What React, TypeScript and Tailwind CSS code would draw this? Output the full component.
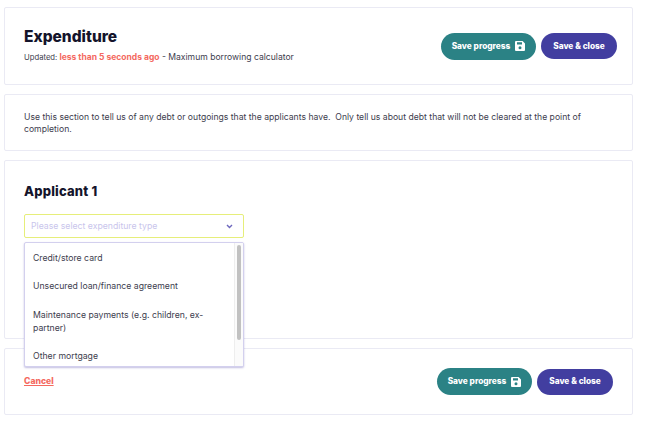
import React from "react";

function SaveIcon() {
  return (
    <svg width="10" height="10" viewBox="0 0 10 10" className="shrink-0">
      <path fillRule="evenodd" fill="#fff" d="M1 0h6.6L10 2.4V9a1 1 0 0 1-1 1H1a1 1 0 0 1-1-1V1a1 1 0 0 1 1-1zM2 1.2v2.2h5V1.2zM5 5.2a1.5 1.5 0 1 0 0 3 1.5 1.5 0 0 0 0-3z" />
    </svg>
  );
}

function Buttons() {
  return (
    <div className="flex items-center gap-[5px] text-[8.3px] font-extrabold text-white">
      <button className="h-[27px] w-[95px] rounded-full bg-[#2b8285] flex items-center justify-center gap-[5px]">
        Save progress <SaveIcon />
      </button>
      <button className="h-[26px] w-[76px] rounded-full bg-[#423ea0] flex items-center justify-center">
        Save &amp; close
      </button>
    </div>
  );
}

const card = "rounded-[2px] border border-[#eaeaf4] bg-white";

export default function App() {
  return (
    <div className="w-[650px] h-[425px] overflow-hidden bg-white pt-[7px] pl-[4px] pr-[17px] flex flex-col gap-[9px] font-['Inter',sans-serif] text-[#3d3d4e]">
      <section className={`${card} h-[78px] pl-[19px] pr-[15px] flex items-center justify-between`}>
        <div className="-mt-[2px]">
          <h1 className="font-extrabold text-[15.5px] leading-[20px] text-[#14142b]">Expenditure</h1>
          <p className="text-[8.6px] leading-[12px] mt-[4px] whitespace-nowrap">
            <span className="text-[7.7px]">Updated: </span>
            <span className="font-bold text-[8.5px] text-[#f4695f]">less than 5 seconds ago</span>
            <span> - Maximum borrowing calculator</span>
          </p>
        </div>
        <Buttons />
      </section>

      <section className={`${card} h-[57px] pl-[19px] pr-[20px] flex items-center`}>
        <p className="text-[8.64px] leading-[12px]">
          Use this section to tell us of any debt or outgoings that the applicants have.&nbsp; Only tell us about debt that will not be cleared at the point of completion.
        </p>
      </section>

      <section className={`${card} h-[179px] pl-[19px] pt-[22px] relative`}>
        <h2 className="font-extrabold text-[13px] tracking-[0.2px] leading-[16px] text-[#14142b]">Applicant 1</h2>
        <div className="mt-[15px] w-[220px] h-[24px] rounded-[2px] border border-[#e6ee7a] pl-[6px] pr-[10px] flex items-center justify-between">
          <span className="text-[8.7px] text-[#c9c5ec] translate-y-[1px]">Please select expenditure type</span>
          <svg width="7" height="5" viewBox="0 0 7 5" fill="none" stroke="#6d67bd" strokeWidth="1.4">
            <path d="M1 1l2.5 2.5L6 1" />
          </svg>
        </div>
        <div className="absolute z-10 left-[19px] top-[81px] w-[220px] h-[125px] rounded-[2px] border border-[#d3d0ee] bg-white shadow-[0_1px_2px_rgba(80,70,170,0.35)] flex overflow-hidden">
          <ul className="flex-1 pl-[8px] pr-[27px] text-[8.7px] leading-[13px]">
            <li className="pt-[9px]">Credit/store card</li>
            <li className="pt-[15px]">Unsecured loan/finance agreement</li>
            <li className="pt-[16px]">Maintenance payments (e.g. children, ex-partner)</li>
            <li className="pt-[15px]">Other mortgage</li>
          </ul>
          <div className="w-[9px] border-l border-[#eeeeee] flex justify-center pt-[2px] bg-[#fbfbfb]">
            <div className="w-[4px] h-[95px] rounded-full bg-[#c1c1c1]" />
          </div>
        </div>
      </section>

      <section className={`${card} h-[67px] pl-[19px] pr-[19px] flex items-start justify-between`}>
        <a className="mt-[26px] font-extrabold text-[8.6px] leading-[12px] text-[#f4695f] underline">Cancel</a>
        <div className="mt-[19px]"><Buttons /></div>
      </section>
    </div>
  );
}
